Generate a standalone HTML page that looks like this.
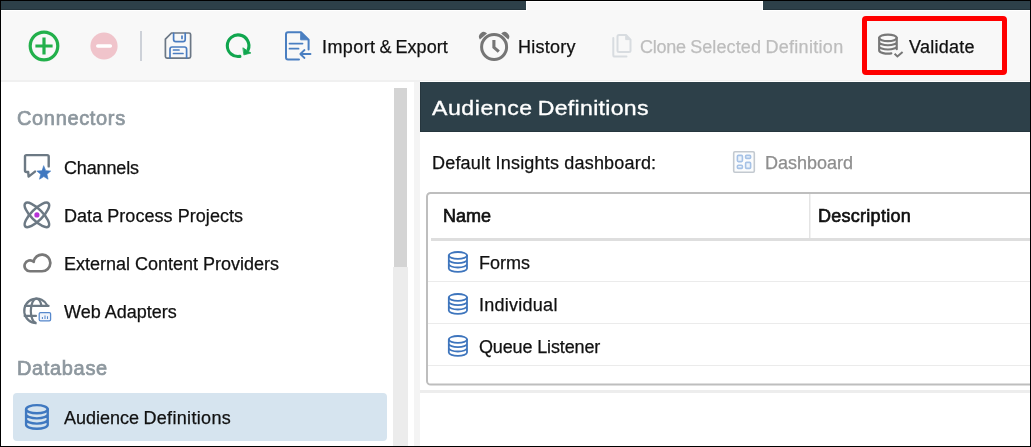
<!DOCTYPE html>
<html>
<head>
<meta charset="utf-8">
<title>Audience Definitions</title>
<style>
html,body{margin:0;padding:0;}
body{width:1031px;height:447px;overflow:hidden;background:#fff;font-family:"Liberation Sans",sans-serif;color:#111;position:relative;}
.abs{position:absolute;}
#frame{position:absolute;left:0;top:0;width:1029px;height:445px;border:1px solid #000;z-index:50;pointer-events:none;}
.t{position:absolute;white-space:nowrap;line-height:1;transform-origin:0 0;will-change:transform;-webkit-text-stroke:0.25px currentColor;}
.tb{font-size:18px;color:#111;}
.sb{font-size:18px;color:#111;}
.hd{font-size:20px;color:#8d979e;-webkit-text-stroke:0.7px #8d979e;letter-spacing:0.65px;}
.md{-webkit-text-stroke:0.65px #111;}
svg{position:absolute;overflow:visible;}
</style>
</head>
<body>
<!-- top dark band -->
<div class="abs" style="left:0;top:0;width:1031px;height:10px;background:#2d4049;"></div>
<div class="abs" style="left:0;top:9px;width:1031px;height:1px;background:#24343c;"></div>
<!-- toolbar -->
<div class="abs" style="left:0;top:10px;width:1031px;height:71px;background:#f8f8f8;"></div>
<div class="abs" style="left:0;top:10px;width:1031px;height:1px;background:#fff;"></div>
<!-- selected tab notch -->
<div class="abs" style="left:526px;top:1px;width:237px;height:10px;background:#f8f8f8;border-top:1px solid #fff;border-left:1px solid #fff;border-right:1px solid #fff;box-sizing:border-box;"></div>
<!-- toolbar bottom border -->
<div class="abs" style="left:0;top:80px;width:1031px;height:2px;background:#f0f0f0;"></div>

<!-- left panel -->
<div class="abs" style="left:0;top:82px;width:414px;height:365px;background:#fff;"></div>
<!-- scrollbar -->
<div class="abs" style="left:393px;top:267px;width:15px;height:180px;background:#ececec;"></div>
<div class="abs" style="left:394px;top:88px;width:13px;height:179px;background:#d4d4d4;"></div>
<!-- splitter -->
<div class="abs" style="left:414px;top:82px;width:6px;height:365px;background:#f4f4f4;"></div>

<!-- right panel -->
<div class="abs" style="left:420px;top:81px;width:611px;height:1px;background:#fff;"></div>
<div class="abs" style="left:420px;top:82px;width:611px;height:50px;background:#2d4049;border-left:1px solid #26363e;box-sizing:border-box;"></div>
<div class="abs" style="left:420px;top:131px;width:611px;height:1px;background:#26363e;"></div>
<div class="abs" style="left:420px;top:132px;width:611px;height:315px;background:#fff;"></div>
<div class="abs" style="left:420px;top:390px;width:611px;height:3px;background:#ededed;"></div>

<!-- table -->
<svg width="1031" height="447" viewBox="0 0 1031 447" style="left:0;top:0;"><rect x="427" y="193" width="640" height="191.6" rx="3.6" fill="#fff" stroke="#bebebe" stroke-width="2"/></svg>
<div class="abs" style="left:431px;top:238px;width:600px;height:3px;background:#dedede;"></div>
<div class="abs" style="left:809px;top:194px;width:2px;height:44px;background:linear-gradient(90deg,#e4e4e4 0,#e4e4e4 1px,#f2f2f2 1px);"></div>
<div class="abs" style="left:428px;top:281px;width:603px;height:1px;background:#ebebeb;"></div>
<div class="abs" style="left:428px;top:323px;width:603px;height:1px;background:#ebebeb;"></div>
<div class="abs" style="left:428px;top:365px;width:603px;height:1px;background:#ebebeb;"></div>

<!-- sidebar selected -->
<div class="abs" style="left:13px;top:393px;width:374px;height:48px;background:#d6e4ef;border-radius:4px;"></div>

<!-- TEXT: toolbar -->
<div class="t tb" id="t_imp" style="left:322px;top:38px;letter-spacing:0.05px;word-spacing:-1.1px;"><span style="letter-spacing:0.42px">Import</span> &amp; Export</div>
<div class="t tb" id="t_his" style="left:518px;top:38px;letter-spacing:0.26px;">History</div>
<div class="t tb" id="t_clo" style="left:640px;top:38px;color:#bdbdbd;letter-spacing:0;word-spacing:-0.6px;"><span style="letter-spacing:-0.26px">Clone</span> <span style="letter-spacing:0.1px">Selected</span> <span style="letter-spacing:0.3px">Definition</span></div>
<div class="t tb" id="t_val" style="left:909px;top:38px;letter-spacing:0.27px;">Validate</div>

<!-- TEXT: sidebar -->
<div class="t hd" id="t_con" style="left:17px;top:108px;">Connectors</div>
<div class="t sb" id="t_cha" style="left:64px;top:159px;letter-spacing:-0.15px;">Channels</div>
<div class="t sb" id="t_dpp" style="left:64px;top:207px;letter-spacing:0.05px;">Data Process Projects</div>
<div class="t sb" id="t_ecp" style="left:64px;top:255px;">External Content Providers</div>
<div class="t sb" id="t_web" style="left:64px;top:303px;">Web Adapters</div>
<div class="t hd" id="t_dat" style="left:17px;top:358px;">Database</div>
<div class="t sb" id="t_aud" style="left:64px;top:409px;letter-spacing:0;word-spacing:-0.6px;"><span style="letter-spacing:0px">Audience</span> <span style="letter-spacing:0.32px">Definitions</span></div>

<!-- TEXT: right panel -->
<div class="t" id="t_title" style="left:432px;top:97px;font-size:21px;color:#fff;letter-spacing:0.2px;transform:scaleX(1.1);-webkit-text-stroke:0.35px #fff;word-spacing:-1.5px;"><span style="letter-spacing:0.5px">Audience</span> <span style="letter-spacing:0.27px">Definitions</span></div>
<div class="t" id="t_def" style="left:432px;top:154px;font-size:18px;letter-spacing:0.19px;">Default Insights dashboard:</div>
<div class="t" id="t_dash" style="left:765px;top:154px;font-size:18px;color:#8e8e8e;">Dashboard</div>
<div class="t md" id="t_name" style="left:443px;top:207px;font-size:18px;font-weight:normal;">Name</div>
<div class="t md" id="t_desc" style="left:818px;top:207px;font-size:18px;font-weight:normal;letter-spacing:0.27px;">Description</div>
<div class="t" id="t_forms" style="left:479px;top:254px;font-size:18px;">Forms</div>
<div class="t" id="t_ind" style="left:479px;top:296px;font-size:18px;letter-spacing:0.26px;">Individual</div>
<div class="t" id="t_que" style="left:479px;top:338px;font-size:18px;letter-spacing:-0.14px;">Queue Listener</div>


<!-- ICONS -->
<svg id="icons" width="1031" height="447" viewBox="0 0 1031 447" style="left:0;top:0;" fill="none" stroke-linecap="round" stroke-linejoin="round">
<defs>
<g id="db">
<ellipse cx="10" cy="4.2" rx="9.1" ry="3.4"/>
<path d="M0.9,4.2 V17.2 A9.1,3.4 0 0 0 19.1,17.2 V4.2 M0.9,8.5 A9.1,3.4 0 0 0 19.1,8.5 M0.9,12.9 A9.1,3.4 0 0 0 19.1,12.9"/>
</g>
</defs>
<!-- plus -->
<g stroke="#22b04b" stroke-width="3.2">
<circle cx="44" cy="46" r="13.8"/>
<path d="M35.4,46 H52.6 M44,37.4 V54.6" stroke-linecap="butt"/>
</g>
<!-- minus -->
<circle cx="104" cy="46" r="13.6" fill="#f0c4cb"/>
<path d="M97.8,46 H110.3" stroke="#fff" stroke-width="3.6"/>
<!-- separator -->
<rect x="140" y="31" width="2" height="30" fill="#cdd1d8"/>
<!-- save -->
<g stroke-width="1.7">
<path d="M171.5,33 H189 Q190.6,33 190.6,34.6 V56.6 Q190.6,58.2 189,58.2 H167 Q165.4,58.2 165.4,56.6 V39.2 Z" stroke="#6b7785"/>
<path d="M173.6,33.4 V39.4 Q173.6,41.6 175.8,41.6 H183 Q185.2,41.6 185.2,39.4 V33.4 M182,36 V38.4" stroke="#4a7cc0"/>
<path d="M170,57.8 V49.2 Q170,47 172.2,47 H184.4 Q186.6,47 186.6,49.2 V57.8 M173.5,50 H179 M173.5,53.5 H183" stroke="#4a7cc0"/>
</g>
<!-- refresh -->
<path d="M239.9,56.4 A10.8,10.8 0 1 1 248.2,49.6" stroke="#10a64e" stroke-width="3.1"/>
<path d="M243.2,48 L250.9,53 L244.2,54.8 Z" fill="#10a64e" stroke="#10a64e" stroke-width="0.8"/>
<!-- import/export -->
<g stroke="#4a7fc1" stroke-width="2">
<path d="M299,59.4 H288 Q286,59.4 286,57.4 V34.3 Q286,32.3 288,32.3 H301 L308.6,39.8 V49.6"/>
<path d="M301,32.3 L308.6,39.8 H301 Z" fill="#4a7fc1" stroke-width="1"/>
<path d="M289.5,43.6 H302.5 M289.5,48.7 H298.5" stroke-width="1.8"/>
<path d="M310.5,54 H300.5 M304.5,50 L300.3,54 L304.5,58" stroke-width="1.8"/>
</g>
<!-- clock -->
<g stroke="#757575" stroke-width="3">
<circle cx="494.1" cy="47" r="12.5"/>
<path d="M493.9,39.9 V47.3 L498.8,51.7" stroke-width="3.1" stroke-linecap="butt" stroke-linejoin="miter"/>
<path d="M479.9,39.5 A4.7,4.7 0 0 1 487,33.4 Z" fill="#757575" stroke="none"/>
<path d="M508.3,39.5 A4.7,4.7 0 0 0 501.2,33.4 Z" fill="#757575" stroke="none"/>
</g>
<!-- clone -->
<g stroke="#d8dce0" stroke-width="2">
<path d="M626,34.9 H619 Q617.5,34.9 617.5,36.4 V50.4 Q617.5,51.9 619,51.9 H629 Q630.5,51.9 630.5,50.4 V39.6 Z"/>
<path d="M626,34.9 L630.5,39.6 H626 Z" fill="#d8dce0" stroke-width="1"/>
<path d="M613.3,38 V55 Q613.3,56.6 614.9,56.6 H626.5"/>
</g>
<!-- validate db -->
<g stroke="#777" stroke-width="2.25" transform="translate(878.3,33.8) scale(0.965)">
<ellipse cx="10" cy="4.2" rx="9.1" ry="3.4"/>
<path d="M0.9,4.2 V17.2 A9.1,3.4 0 0 0 13.5,20.3 M19.1,4.2 V16 M0.9,8.5 A9.1,3.4 0 0 0 19.1,8.5 M0.9,12.9 A9.1,3.4 0 0 0 19.1,12.9"/>
</g>
<path d="M894.6,53.7 L897.4,56.4 L902.6,52" stroke="#777" stroke-width="2" stroke-linecap="butt" stroke-linejoin="miter"/>

<!-- sidebar: channels -->
<path d="M35,171.6 L28.6,176.6 L28.2,172 H26.5 Q25,172 25,170.5 V156.6 Q25,155.1 26.5,155.1 H47.2 Q48.7,155.1 48.7,156.6 V166.4" stroke="#6c7984" stroke-width="2.4"/>
<path id="star" fill="#3f78c0" stroke="#3f78c0" stroke-width="0.6" d="M43.80,166.00 L45.74,170.63 L50.74,171.04 L46.94,174.32 L48.09,179.21 L43.80,176.60 L39.51,179.21 L40.66,174.32 L36.86,171.04 L41.86,170.63 Z"/>
<!-- sidebar: atom -->
<g stroke="#6c7984" stroke-width="2.5">
<ellipse cx="36.9" cy="214.9" rx="16.4" ry="5.7" transform="rotate(45 36.9 214.9)"/>
<ellipse cx="36.9" cy="214.9" rx="16.4" ry="5.7" transform="rotate(-45 36.9 214.9)"/>
</g>
<circle cx="36.9" cy="214.9" r="2.6" fill="#b633d6"/>
<!-- sidebar: cloud -->
<path d="M30.1,271.25 A5.45,5.45 0 1 1 33.7,261.8 A8.35,8.35 0 1 1 42,271.25 Z" stroke="#787878" stroke-width="2.7"/>
<!-- sidebar: globe -->
<g stroke="#6c7984" stroke-width="2.2">
<path d="M47.6,306 A12.2,12.2 0 1 0 36.4,323.1" stroke-linecap="butt"/>
<path d="M36.4,298.7 A5.6,12.2 0 0 0 36.4,323.1 M36.4,298.7 A5.6,12.2 0 0 1 41.5,305.8" stroke-linecap="butt"/>
<path d="M25,305.9 H48.6 M24.6,315.9 H36" stroke-width="2.1"/>
</g>
<rect x="39.2" y="312.5" width="11.4" height="8.3" rx="1.3" fill="#f0f4fb" stroke="#5688cc" stroke-width="1.25"/>
<path d="M42.4,317 V318.9 M45,315.5 V318.9 M47.5,316.2 V318.9" stroke="#5688cc" stroke-width="1.05" stroke-linecap="butt"/>
<!-- sidebar: db -->
<use href="#db" transform="translate(25,404.2) scale(1.19)" stroke="#3f78c0" stroke-width="2.0"/>
<!-- dashboard icon -->
<rect x="733.7" y="151.7" width="20.6" height="20.6" rx="1.2" fill="#fbfcfd" stroke="#c3c9d0" stroke-width="1.6"/>
<g stroke="#a6c2e6" stroke-width="1.6" fill="#eef4fb">
<rect x="737.4" y="155.4" width="5" height="6.2" rx="1"/>
<rect x="745.6" y="155.4" width="5" height="3" rx="1"/>
<rect x="737.4" y="165.2" width="5" height="3.2" rx="1"/>
<rect x="745.6" y="162.4" width="5" height="6" rx="1"/>
</g>
<!-- table db icons -->
<use href="#db" transform="translate(447.9,251.2)" stroke="#3e75bd" stroke-width="1.8"/>
<use href="#db" transform="translate(447.9,293.2)" stroke="#3e75bd" stroke-width="1.8"/>
<use href="#db" transform="translate(447.9,335.2)" stroke="#3e75bd" stroke-width="1.8"/>
</svg>

<!-- red highlight -->
<div class="abs" style="left:862px;top:16px;width:145px;height:59px;border:5px solid #f00;border-radius:4px;box-sizing:border-box;"></div>

<div id="frame"></div>
</body>
</html>
